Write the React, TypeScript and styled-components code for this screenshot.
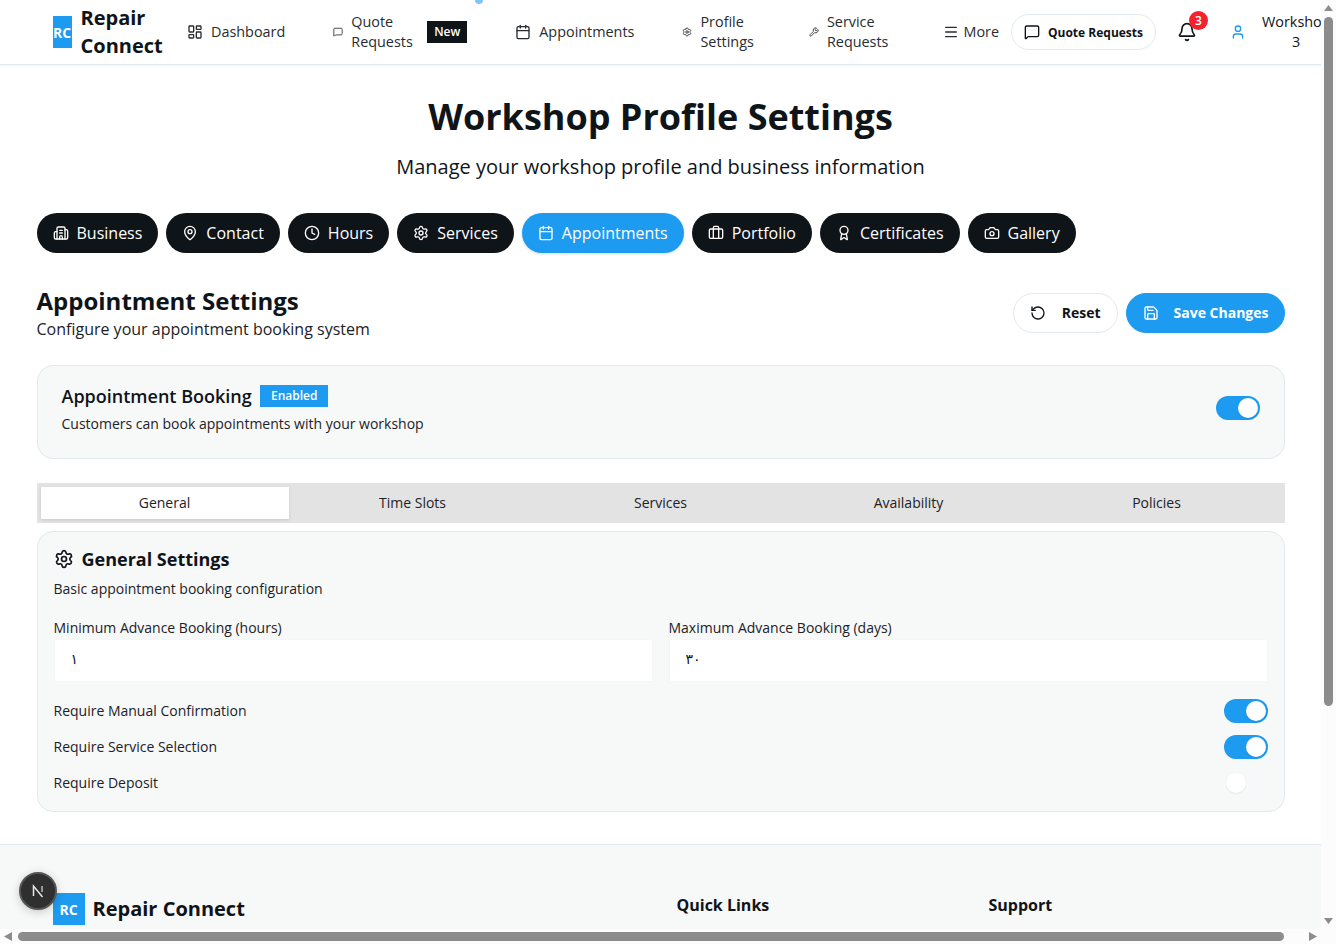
import { ReactNode } from 'react';
import styled, { createGlobalStyle } from 'styled-components';
import {
  Award,
  Bell,
  Briefcase,
  Building2,
  Calendar,
  Camera,
  Clock,
  LayoutDashboard,
  MapPin,
  Menu,
  MessageSquare,
  RotateCcw,
  Save,
  Settings,
  User,
  Wrench,
} from 'lucide-react';

const BLUE = '#1d9bf0';
const INK = '#0f1419';
const LINE = '#e1eaef';
const MUTED = '#f7f8f8';
const BAR = '#8c8c8c';
const BAR_TRACK = '#fcfcfc';

const GlobalStyle = createGlobalStyle`
  html, body {
    margin: 0;
    height: 100%;
    overflow: hidden;
    background: #fff;
  }
  * { box-sizing: border-box; }
  body {
    font-family: "Open Sans", "DejaVu Sans", sans-serif;
    color: ${INK};
  }
`;

const Viewport = styled.div`
  width: 1336px;
  height: 944px;
  overflow: hidden;
  background: #fff;
`;

const Page = styled.div`
  width: 1321px;
`;

/* header */

const Header = styled.header`
  position: relative;
  display: flex;
  align-items: center;
  width: 1347px;
  height: 65px;
  padding-left: 52.5px;
  background: #fff;
  border-bottom: 1px solid ${LINE};
  box-shadow: 0 1px 2px rgba(15, 20, 25, 0.06);
`;

const LogoBox = styled.div<{ $width: number }>`
  flex: none;
  display: flex;
  align-items: center;
  justify-content: center;
  width: ${(p) => p.$width}px;
  height: 32px;
  background: ${BLUE};
  color: #fff;
  font-size: 14px;
  font-weight: 700;
  overflow: hidden;
`;

const LogoText = styled.div`
  width: 91px;
  margin-left: 9px;
  font-size: 20px;
  line-height: 28px;
  font-weight: 700;
`;

const Nav = styled.nav`
  display: flex;
  align-items: center;
`;

const NavItem = styled.a<{ $left: number; $iconGap?: number }>`
  display: flex;
  align-items: center;
  gap: ${(p) => p.$iconGap ?? 8}px;
  margin-left: ${(p) => p.$left}px;
  font-size: 14.4px;
  line-height: 20px;
  font-weight: 500;
  color: #272c30;

  svg { flex: none; }
`;

const NavLabel = styled.span<{ $width?: number }>`
  display: block;
  width: ${(p) => (p.$width ? `${p.$width}px` : 'auto')};
  white-space: ${(p) => (p.$width ? 'normal' : 'nowrap')};
`;

const NewBadge = styled.span`
  display: flex;
  align-items: center;
  justify-content: center;
  width: 40px;
  height: 22px;
  background: ${INK};
  color: #fff;
  font-size: 12px;
  font-weight: 600;
`;

const PingDot = styled.span`
  position: absolute;
  left: 475px;
  top: -4px;
  width: 8px;
  height: 8px;
  border-radius: 50%;
  background: #7fc6f7;
`;

const QuoteButton = styled.a`
  display: flex;
  align-items: center;
  gap: 8px;
  width: 145px;
  height: 36px;
  margin-left: 12px;
  padding-left: 12px;
  border: 1px solid ${LINE};
  border-radius: 18px;
  font-size: 12px;
  font-weight: 700;
  background: #fff;
`;

const BellWrap = styled.span`
  position: relative;
  display: flex;
  margin-left: 21px;
`;

const CountBadge = styled.span`
  position: absolute;
  left: 12px;
  top: -11px;
  display: flex;
  align-items: center;
  justify-content: center;
  width: 19px;
  height: 19px;
  border-radius: 50%;
  background: #f4212e;
  color: #fff;
  font-size: 12px;
  font-weight: 600;
`;

const UserBlock = styled.div`
  display: flex;
  align-items: center;
  margin-left: 33px;
`;

const UserName = styled.span`
  width: 68px;
  margin-left: 16px;
  font-size: 14.4px;
  line-height: 20px;
  font-weight: 500;
  text-align: center;
`;

/* main */

const Main = styled.main`
  width: 1280px;
  margin: 0 auto;
  padding: 32px 16px 32px;
`;

const Title = styled.h1`
  margin: 0;
  font-size: 36px;
  line-height: 40px;
  font-weight: 700;
  text-align: center;
`;

const Subtitle = styled.p`
  margin: 16px 0 0;
  font-size: 20px;
  line-height: 28px;
  text-align: center;
`;

const PillRow = styled.div`
  display: flex;
  gap: 8px;
  margin-top: 32px;
`;

const Pill = styled.button<{ $active?: boolean }>`
  display: flex;
  align-items: center;
  gap: 8px;
  height: 40px;
  padding: 0 16px;
  border: none;
  border-radius: 20px;
  background: ${(p) => (p.$active ? BLUE : INK)};
  box-shadow: ${(p) => (p.$active ? '0 1px 3px rgba(0, 0, 0, 0.15)' : 'none')};
  color: #fff;
  font-family: inherit;
  font-size: 16px;
`;

const SectionHead = styled.div`
  display: flex;
  justify-content: space-between;
  align-items: center;
  margin-top: 32px;
`;

const SectionTitle = styled.h2`
  margin: 0;
  font-size: 24px;
  line-height: 32px;
  font-weight: 700;
`;

const SectionText = styled.p`
  margin: 0;
  font-size: 16px;
  line-height: 24px;
  color: #1c2227;
`;

const Actions = styled.div`
  display: flex;
  gap: 8px;
`;

const ActionButton = styled.button<{ $primary?: boolean }>`
  display: flex;
  align-items: center;
  gap: ${(p) => (p.$primary ? 15 : 16)}px;
  height: 40px;
  padding: 0 ${(p) => (p.$primary ? 15 : 16)}px 2px 16px;
  border: 1px solid ${(p) => (p.$primary ? BLUE : LINE)};
  border-radius: 20px;
  background: ${(p) => (p.$primary ? BLUE : '#fff')};
  color: ${(p) => (p.$primary ? '#fff' : INK)};
  font-family: inherit;
  font-size: 14px;
  font-weight: 700;

  svg { margin-top: 2px; }
`;

const Card = styled.section`
  background: ${MUTED};
  border: 1px solid ${LINE};
  border-radius: 16px;
`;

const BookingCard = styled(Card)`
  display: flex;
  justify-content: space-between;
  align-items: flex-start;
  height: 94px;
  margin-top: 24px;
  padding: 16px 24px 0;
`;

const BookingTitleRow = styled.div`
  display: flex;
  align-items: center;
  gap: 8px;
`;

const BookingTitle = styled.h3`
  margin: 0;
  font-size: 18px;
  line-height: 28px;
  font-weight: 600;
`;

const EnabledBadge = styled.span`
  display: flex;
  align-items: center;
  justify-content: center;
  width: 68px;
  height: 22px;
  padding: 0 0 2px 1px;
  background: ${BLUE};
  color: #fff;
  font-size: 12px;
  font-weight: 600;
`;

const SmallText = styled.p`
  margin: 4px 0 0;
  font-size: 14px;
  line-height: 20px;
  color: #1c2227;
`;

const BookingSwitch = styled.div`
  margin-top: 14px;
`;

const Track = styled.span<{ $on: boolean }>`
  position: relative;
  display: block;
  flex: none;
  width: 44px;
  height: 24px;
  border-radius: 12px;
  background: ${(p) => (p.$on ? BLUE : '#f7f8f9')};
`;

const Thumb = styled.span<{ $on: boolean }>`
  position: absolute;
  top: 2px;
  left: ${(p) => (p.$on ? 22 : 2)}px;
  width: 20px;
  height: 20px;
  border-radius: 50%;
  background: #fff;
  box-shadow: 0 1px 2px rgba(0, 0, 0, 0.08);
`;

const TabList = styled.div`
  display: grid;
  grid-template-columns: repeat(5, 1fr);
  height: 40px;
  margin-top: 24px;
  padding: 4px;
  background: #e3e3e3;
`;

const Tab = styled.div<{ $active?: boolean }>`
  display: flex;
  align-items: center;
  justify-content: center;
  padding-bottom: 2px;
  background: ${(p) => (p.$active ? '#fff' : 'transparent')};
  box-shadow: ${(p) => (p.$active ? '0 1px 3px rgba(0, 0, 0, 0.12)' : 'none')};
  font-size: 14px;
  color: #1c2227;
`;

const SettingsCard = styled(Card)`
  height: 281px;
  margin-top: 8px;
  padding: 15px 16px 0;
`;

const SettingsHead = styled.div`
  display: flex;
  align-items: center;
  gap: 8px;
  font-size: 18px;
  line-height: 24px;
  font-weight: 700;
`;

const SettingsText = styled(SmallText)`
  margin-top: 8px;
`;

const FieldGrid = styled.div`
  display: grid;
  grid-template-columns: 1fr 1fr;
  gap: 16px;
  margin-top: 19px;
`;

const Field = styled.label`
  display: block;
  font-size: 14px;
  line-height: 20px;
  color: #1c2227;
`;

const Input = styled.div`
  display: flex;
  align-items: center;
  height: 43px;
  margin-top: 1px;
  padding: 0 16px 4px;
  background: #fff;
  border: 1px solid #f5f6f6;
  color: ${INK};
  font-size: 14px;
`;

const OptionList = styled.div`
  display: flex;
  flex-direction: column;
  gap: 12px;
  margin-top: 17px;
`;

const Option = styled.div`
  display: flex;
  justify-content: space-between;
  align-items: center;
  height: 24px;
  font-size: 14px;
  color: #1c2227;
`;

const OptionLabel = styled.span`
  padding-bottom: 1px;
`;

/* footer */

const Footer = styled.footer`
  display: grid;
  grid-template-columns: 624px 312px 1fr;
  min-height: 375px;
  padding: 48px 0 0 52.5px;
  background: ${MUTED};
  border-top: 1px solid ${LINE};
`;

const FooterBrand = styled.div`
  display: flex;
  align-items: center;
  align-self: start;
  gap: 8px;
  font-size: 20px;
  font-weight: 700;
`;

const FooterBrandName = styled.span`
  padding-bottom: 2px;
`;

const FooterHeading = styled.h4`
  margin: 0;
  font-size: 16px;
  line-height: 24px;
  font-weight: 700;
`;

/* floating parts */

const DevBadge = styled.div`
  position: fixed;
  left: 19px;
  top: 872px;
  display: flex;
  align-items: center;
  justify-content: center;
  width: 38px;
  height: 38px;
  border-radius: 50%;
  background: #2f2f2f;
  border: 2px solid #555;
  box-shadow: 0 2px 10px rgba(0, 0, 0, 0.2);
`;

const VerticalBar = styled.div`
  position: fixed;
  top: 0;
  right: 0;
  bottom: 0;
  display: flex;
  flex-direction: column;
  align-items: center;
  width: 15px;
  padding-top: 5px;
  background: ${BAR_TRACK};
`;

const VerticalThumb = styled.div`
  width: 9px;
  height: 689px;
  margin: 6px 0 212px;
  border-radius: 5px;
  background: ${BAR};
`;

const HorizontalBar = styled.div`
  position: fixed;
  left: 0;
  right: 15px;
  bottom: 0;
  display: flex;
  align-items: center;
  height: 15px;
  padding-left: 4px;
  background: ${BAR_TRACK};
`;

const HorizontalThumb = styled.div`
  width: 1266px;
  height: 9px;
  margin: 0 25px 0 6px;
  border-radius: 5px;
  background: ${BAR};
`;

const pills: { label: string; icon: ReactNode; active?: boolean }[] = [
  { label: 'Business', icon: <Building2 size={16} /> },
  { label: 'Contact', icon: <MapPin size={16} /> },
  { label: 'Hours', icon: <Clock size={16} /> },
  { label: 'Services', icon: <Settings size={16} /> },
  { label: 'Appointments', icon: <Calendar size={16} />, active: true },
  { label: 'Portfolio', icon: <Briefcase size={16} /> },
  { label: 'Certificates', icon: <Award size={16} /> },
  { label: 'Gallery', icon: <Camera size={16} /> },
];

const tabs = ['General', 'Time Slots', 'Services', 'Availability', 'Policies'];

const options = [
  { label: 'Require Manual Confirmation', on: true },
  { label: 'Require Service Selection', on: true },
  { label: 'Require Deposit', on: false },
];

function Switch({ on }: { on: boolean }) {
  return (
    <Track $on={on}>
      <Thumb $on={on} />
    </Track>
  );
}

function BarArrow({ points, width, height }: { points: string; width: number; height: number }) {
  return (
    <svg width={width} height={height} viewBox={`0 0 ${width} ${height}`} style={{ flex: 'none' }}>
      <polygon points={points} fill={BAR} />
    </svg>
  );
}

export default function App() {
  return (
    <>
      <GlobalStyle />
      <Viewport>
        <Page>
          <Header>
            <PingDot />
            <LogoBox $width={19}>RC</LogoBox>
            <LogoText>Repair Connect</LogoText>
            <Nav>
              <NavItem $left={15.5}>
                <LayoutDashboard size={16} />
                <NavLabel>Dashboard</NavLabel>
              </NavItem>
              <NavItem $left={48}>
                <MessageSquare size={10} />
                <NavLabel $width={68}>Quote Requests</NavLabel>
                <NewBadge>New</NewBadge>
              </NavItem>
              <NavItem $left={48}>
                <Calendar size={16} />
                <NavLabel>Appointments</NavLabel>
              </NavItem>
              <NavItem $left={48}>
                <Settings size={10} />
                <NavLabel $width={70}>Profile Settings</NavLabel>
              </NavItem>
              <NavItem $left={38.5}>
                <Wrench size={10} />
                <NavLabel $width={70}>Service Requests</NavLabel>
              </NavItem>
              <NavItem $left={46.5} $iconGap={4}>
                <Menu size={16} />
                <NavLabel>More</NavLabel>
              </NavItem>
            </Nav>
            <QuoteButton>
              <MessageSquare size={16} />
              Quote Requests
            </QuoteButton>
            <BellWrap>
              <Bell size={20} />
              <CountBadge>3</CountBadge>
            </BellWrap>
            <UserBlock>
              <User size={16} color={BLUE} />
              <UserName>Workshop 3</UserName>
            </UserBlock>
          </Header>

          <Main>
            <Title>Workshop Profile Settings</Title>
            <Subtitle>Manage your workshop profile and business information</Subtitle>

            <PillRow>
              {pills.map((pill) => (
                <Pill key={pill.label} $active={pill.active}>
                  {pill.icon}
                  {pill.label}
                </Pill>
              ))}
            </PillRow>

            <SectionHead>
              <div>
                <SectionTitle>Appointment Settings</SectionTitle>
                <SectionText>Configure your appointment booking system</SectionText>
              </div>
              <Actions>
                <ActionButton>
                  <RotateCcw size={16} />
                  Reset
                </ActionButton>
                <ActionButton $primary>
                  <Save size={16} />
                  Save Changes
                </ActionButton>
              </Actions>
            </SectionHead>

            <BookingCard>
              <div>
                <BookingTitleRow>
                  <BookingTitle>Appointment Booking</BookingTitle>
                  <EnabledBadge>Enabled</EnabledBadge>
                </BookingTitleRow>
                <SmallText>Customers can book appointments with your workshop</SmallText>
              </div>
              <BookingSwitch>
                <Switch on />
              </BookingSwitch>
            </BookingCard>

            <TabList>
              {tabs.map((tab, index) => (
                <Tab key={tab} $active={index === 0}>{tab}</Tab>
              ))}
            </TabList>

            <SettingsCard>
              <SettingsHead>
                <Settings size={20} />
                General Settings
              </SettingsHead>
              <SettingsText>Basic appointment booking configuration</SettingsText>
              <FieldGrid>
                <Field>
                  Minimum Advance Booking (hours)
                  <Input>١</Input>
                </Field>
                <Field>
                  Maximum Advance Booking (days)
                  <Input>٣٠</Input>
                </Field>
              </FieldGrid>
              <OptionList>
                {options.map((option) => (
                  <Option key={option.label}>
                    <OptionLabel>{option.label}</OptionLabel>
                    <Switch on={option.on} />
                  </Option>
                ))}
              </OptionList>
            </SettingsCard>
          </Main>

          <Footer>
            <FooterBrand>
              <LogoBox $width={32}>RC</LogoBox>
              <FooterBrandName>Repair Connect</FooterBrandName>
            </FooterBrand>
            <FooterHeading>Quick Links</FooterHeading>
            <FooterHeading>Support</FooterHeading>
          </Footer>
        </Page>
      </Viewport>

      <DevBadge>
        <svg width="18" height="18" viewBox="0 0 18 18" fill="none">
          <path d="M4.5 14V4l9 11" stroke="#e8e8e8" strokeWidth="1.5" />
          <path d="M13 4v6" stroke="#bbb" strokeWidth="1.5" />
        </svg>
      </DevBadge>

      <VerticalBar>
        <BarArrow width={9} height={6} points="4.5,0 9,6 0,6" />
        <VerticalThumb />
        <BarArrow width={9} height={6} points="0,0 9,0 4.5,6" />
      </VerticalBar>
      <HorizontalBar>
        <BarArrow width={8} height={9} points="8,0 8,9 0,4.5" />
        <HorizontalThumb />
        <BarArrow width={8} height={9} points="0,0 8,4.5 0,9" />
      </HorizontalBar>
    </>
  );
}
